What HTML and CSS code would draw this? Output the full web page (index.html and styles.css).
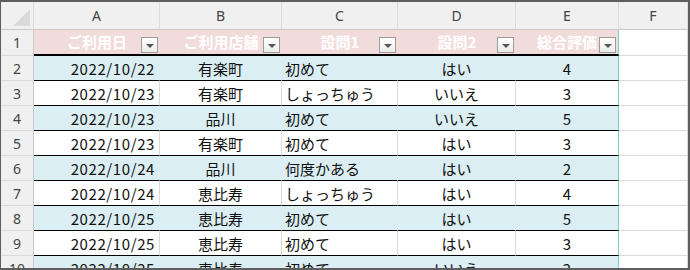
FILE: index.html
```html
<!DOCTYPE html>
<html lang="ja">
<head>
    <meta charset="UTF-8">
    <title>アンケート集計</title>
    <link rel="stylesheet" href="styles.css">
</head>
<body>
    <div class="sheet">
        <div class="row colhead">
            <div class="corner"><span class="corner-mark"></span></div>
            <div class="col">A</div>
            <div class="col">B</div>
            <div class="col">C</div>
            <div class="col">D</div>
            <div class="col">E</div>
            <div class="col">F</div>
        </div>

        <div class="row head">
            <div class="rh">1</div>
            <div class="th">ご利用日<span class="filter"></span></div>
            <div class="th">ご利用店舗<span class="filter"></span></div>
            <div class="th">設問1<span class="filter"></span></div>
            <div class="th">設問2<span class="filter"></span></div>
            <div class="th last">総合評価<span class="filter"></span></div>
            <div class="empty"></div>
        </div>

        <div id="rows"></div>
    </div>

    <script>
        const data = [
            ['2022/10/22', '有楽町', '初めて', 'はい', 4],
            ['2022/10/23', '有楽町', 'しょっちゅう', 'いいえ', 3],
            ['2022/10/23', '品川', '初めて', 'いいえ', 5],
            ['2022/10/23', '有楽町', '初めて', 'はい', 3],
            ['2022/10/24', '品川', '何度かある', 'はい', 2],
            ['2022/10/24', '恵比寿', 'しょっちゅう', 'はい', 4],
            ['2022/10/25', '恵比寿', '初めて', 'はい', 5],
            ['2022/10/25', '恵比寿', '初めて', 'はい', 3],
            ['2022/10/25', '恵比寿', '初めて', 'いいえ', 2]
        ];
        const align = ['right', 'center', 'left', 'center', 'center'];

        const rows = document.getElementById('rows');
        data.forEach(function(rec, i) {
            const row = document.createElement('div');
            row.className = 'row body' + (i % 2 === 0 ? ' band' : '');

            const rh = document.createElement('div');
            rh.className = 'rh';
            rh.textContent = i + 2;
            row.appendChild(rh);

            rec.forEach(function(val, j) {
                const cell = document.createElement('div');
                cell.className = 'td ' + align[j] + (j === 4 ? ' last' : '') + (j === 0 ? ' date' : '');
                cell.textContent = val;
                row.appendChild(cell);
            });

            const empty = document.createElement('div');
            empty.className = 'empty';
            row.appendChild(empty);
            rows.appendChild(row);
        });
    </script>
</body>
</html>
```

FILE: styles.css
```css
html, body {
    margin: 0;
    padding: 0;
    background-color: #ffffff;
}
.sheet {
    width: 690px;
    height: 270px;
    box-sizing: border-box;
    overflow: hidden;
    border-style: solid;
    border-color: #5e5e5e;
    border-width: 2px 2px 2px 1px;
    font-family: "Noto Sans CJK JP", "Noto Sans", sans-serif;
    font-size: 15px;
    color: #111;
}
.row {
    display: grid;
    grid-template-columns: 33px 126px 122px 116px 118px 103px 1fr;
}
.row > div {
    box-sizing: border-box;
    display: flex;
    align-items: center;
    white-space: nowrap;
}

/* column letters */
.colhead {
    height: 28px;
}
.colhead > div {
    background-color: #f0f0f0;
    border-right: 1px solid #dcdcdc;
    border-bottom: 1px solid #c8c8c8;
}
.corner {
    position: relative;
}
.corner-mark {
    position: absolute;
    right: 3px;
    bottom: 3px;
    width: 0;
    height: 0;
    border-left: 17px solid transparent;
    border-bottom: 17px solid #dadada;
}
.col {
    justify-content: center;
    font-family: "Noto Sans", sans-serif;
    font-size: 14px;
    color: #444;
}

/* row numbers */
.rh {
    justify-content: center;
    background-color: #f0f0f0;
    border-right: 1px solid #c8c8c8;
    border-bottom: 1px solid #dadada;
    font-family: "Noto Sans", sans-serif;
    font-size: 14px;
    color: #444;
}

/* table header */
.head {
    height: 26px;
}
.th {
    position: relative;
    justify-content: center;
    background-color: #f2dcdb;
    border-bottom: 2px solid #000;
    color: #ffffff;
    font-weight: bold;
    padding-bottom: 1px;
}
.filter {
    position: absolute;
    right: 2px;
    bottom: 1px;
    width: 17px;
    height: 16px;
    box-sizing: border-box;
    border: 1px solid #9c9c9c;
    background: linear-gradient(#ffffff, #ececec);
}
.filter::after {
    content: "";
    position: absolute;
    left: 4px;
    top: 6px;
    border-left: 4px solid transparent;
    border-right: 4px solid transparent;
    border-top: 4px solid #555;
}

/* table body */
.body {
    height: 25px;
}
.td {
    border-bottom: 1px solid #000;
    border-right: 1px solid #dadada;
    padding-top: 1px;
}
.band .td {
    background-color: #daeef3;
    border-right-color: #daeef3;
}
.td.last,
.th.last,
.band .td.last {
    border-right: 1px solid #7ccfcf;
}
.td.right {
    justify-content: flex-end;
    padding-right: 4px;
}
.td.center {
    justify-content: center;
}
.td.left {
    padding-left: 3px;
}
.date {
    letter-spacing: 0.6px;
}
.empty {
    border-right: 1px solid #dadada;
    border-bottom: 1px solid #dadada;
}
```
